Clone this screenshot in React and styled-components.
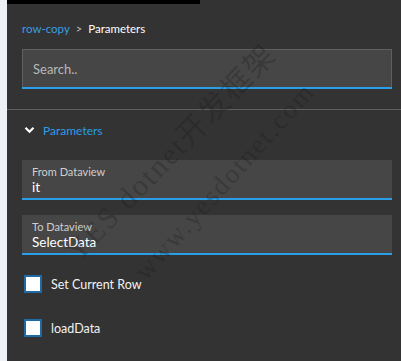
import React from 'react';
import styled, { createGlobalStyle } from 'styled-components';

const GlobalStyle = createGlobalStyle`
  html, body {
    margin: 0;
    padding: 0;
    background: #eef2f6;
    font-family: "Lato", "Liberation Sans", sans-serif;
  }
`;

const Page = styled.div`
  padding-left: 7px;
  height: 361px;
  overflow: hidden;
`;

const Panel = styled.div`
  position: relative;
  background: #333333;
  height: 361px;
  overflow: hidden;
`;

const TopBar = styled.div`
  width: 193px;
  height: 4px;
  background: #000;
`;

const Header = styled.div`
  padding: 15px 9px 0 15px;
`;

const Breadcrumb = styled.div`
  display: flex;
  align-items: center;
  height: 18px;
  font-size: 11.5px;
  color: #fff;
  gap: 6px;
`;

const Crumb = styled.span`
  color: ${p => (p.$link ? '#3a9de0' : '#fff')};
`;

const Sep = styled.span`
  color: #bbb;
  font-size: 11px;
`;

const Search = styled.div`
  margin-top: 12px;
  height: 38px;
  box-sizing: border-box;
  background: #464646;
  border: 1px solid #606060;
  border-bottom: none;
  box-shadow: 0 2px 0 #2a9ee6;
  display: flex;
  align-items: center;
  padding-left: 10px;
  color: #b8b8b8;
  font-size: 13px;
`;

const Divider = styled.div`
  margin-top: 22px;
  height: 1px;
  background: #606060;
`;

const Body = styled.div`
  padding: 11px 9px 0 15px;
`;

const SectionHead = styled.div`
  display: flex;
  align-items: center;
  height: 18px;
  gap: 8px;
  padding-left: 2px;
  color: #2a9ee6;
  font-size: 12px;
`;

const Fields = styled.div`
  margin-top: 21px;
  display: flex;
  flex-direction: column;
  gap: 15px;
`;

const Field = styled.div`
  background: #464646;
  border-bottom: 2px solid #2a9ee6;
  padding: 4px 10px 0;
  box-sizing: content-box;
  height: 34px;
`;

const FieldLabel = styled.div`
  font-size: 11px;
  color: #cfcfcf;
  line-height: 15px;
`;

const FieldValue = styled.div`
  font-size: 13.5px;
  color: #fff;
  line-height: 17px;
`;

const Checks = styled.div`
  margin-top: 20px;
  display: flex;
  flex-direction: column;
  gap: 26px;
`;

const CheckRow = styled.label`
  display: flex;
  align-items: center;
  height: 18px;
  gap: 9px;
  padding-left: 2px;
  color: #f2f2f2;
  font-size: 12.5px;
`;

const Box = styled.span`
  width: 18px;
  height: 18px;
  box-sizing: border-box;
  border: 2px solid #1d6aa5;
  background: #fff;
`;

const Watermark = styled.div`
  position: absolute;
  left: ${p => p.$x}px;
  top: ${p => p.$y}px;
  transform: rotate(${p => p.$angle}deg);
  transform-origin: left top;
  font-family: "Liberation Serif", "Noto Sans CJK SC", serif;
  font-size: ${p => p.$size}px;
  line-height: 1.1;
  letter-spacing: 2px;
  color: rgba(20, 20, 20, 0.26);
  white-space: nowrap;
  pointer-events: none;
`;

function Chevron() {
  return (
    <svg width="11" height="8" viewBox="0 0 11 8">
      <path d="M1.5 1.8 L5.5 5.8 L9.5 1.8" fill="none" stroke="#fff" strokeWidth="2.2" />
    </svg>
  );
}

export default function App() {
  return (
    <>
      <GlobalStyle />
      <Page>
        <Panel>
          <TopBar />
          <Header>
            <Breadcrumb>
              <Crumb $link>row-copy</Crumb>
              <Sep>&gt;</Sep>
              <Crumb>Parameters</Crumb>
            </Breadcrumb>
            <Search>Search..</Search>
          </Header>
          <Divider />
          <Body>
            <SectionHead>
              <Chevron />
              <span>Parameters</span>
            </SectionHead>
            <Fields>
              <Field>
                <FieldLabel>From Dataview</FieldLabel>
                <FieldValue>it</FieldValue>
              </Field>
              <Field>
                <FieldLabel>To Dataview</FieldLabel>
                <FieldValue>SelectData</FieldValue>
              </Field>
            </Fields>
            <Checks>
              <CheckRow>
                <Box />
                Set Current Row
              </CheckRow>
              <CheckRow>
                <Box />
                loadData
              </CheckRow>
            </Checks>
          </Body>
          <Watermark $x={52} $y={244} $angle={-46} $size={30}>YES dotnet开发框架</Watermark>
          <Watermark $x={122} $y={266} $angle={-48} $size={27}>www.yesdotnet.com</Watermark>
        </Panel>
      </Page>
    </>
  );
}
